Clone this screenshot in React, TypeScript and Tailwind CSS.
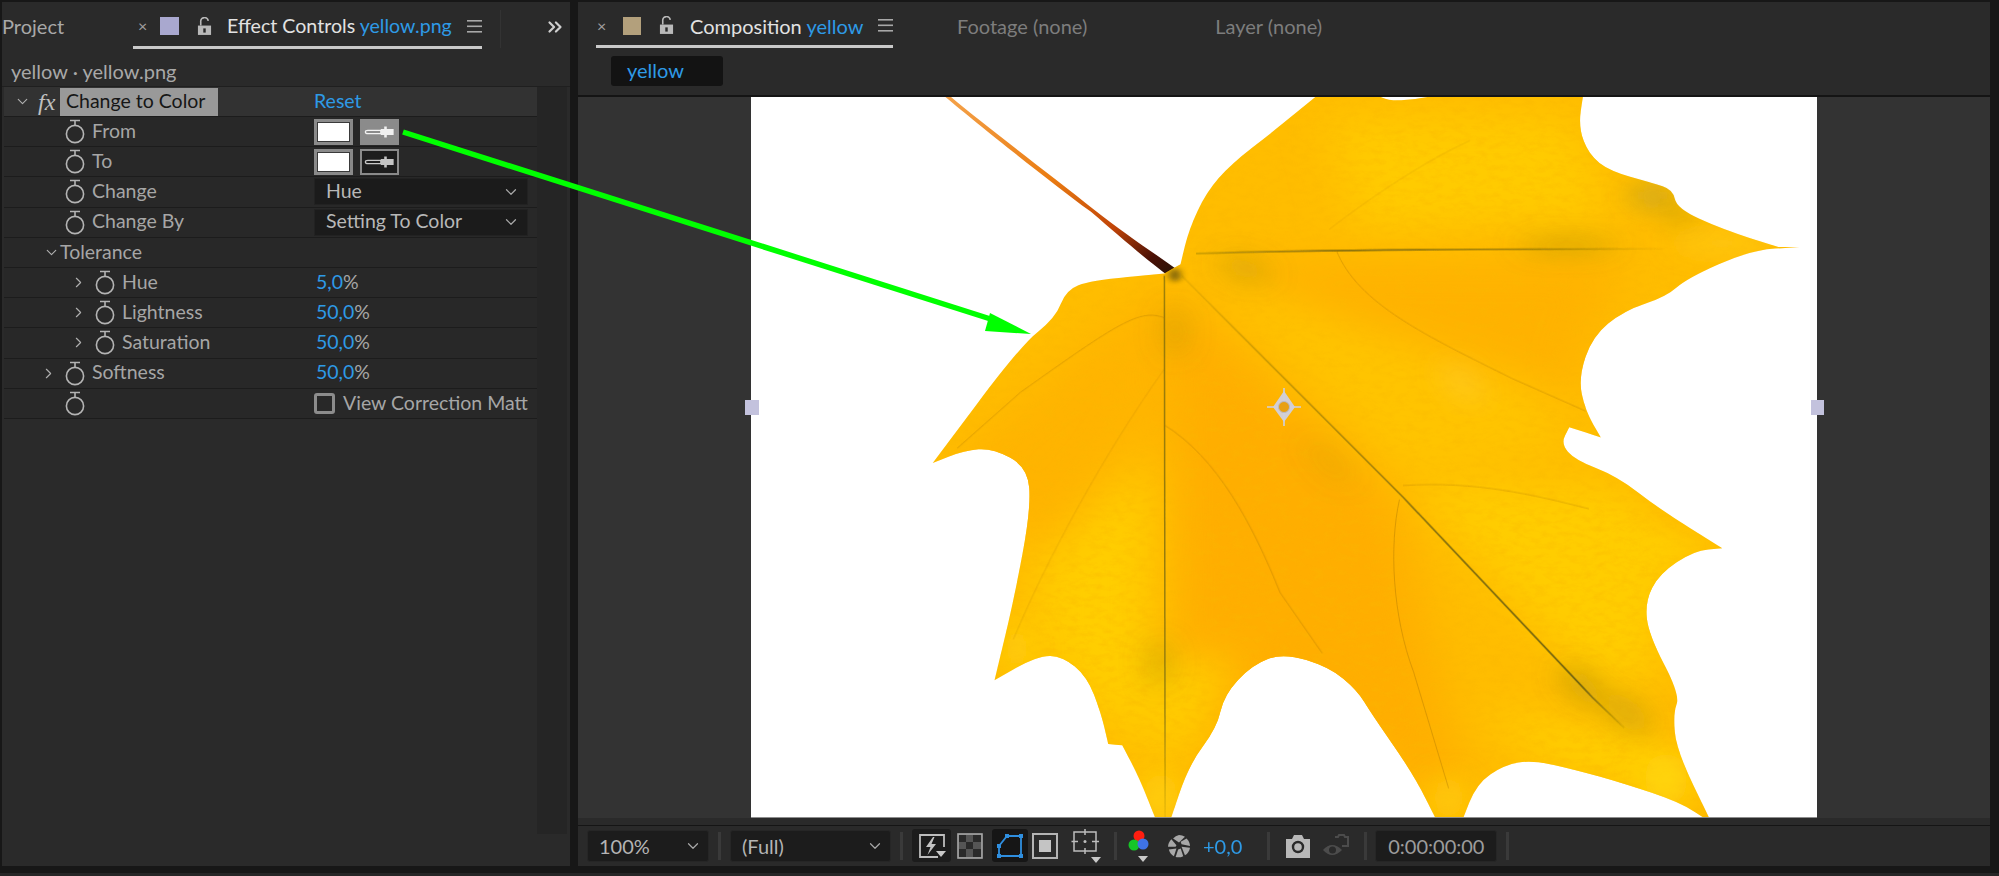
import React from "react";
import { ChevronDown, ChevronRight, ChevronsRight } from "lucide-react";

type P = [number, number, number?];
const outline: P[] = [
  [628,375,1],[640,300],[665,220],[700,160],[760,90],[825,10,1],[905,10,1],[925,24],[960,22],[1000,10,1],[1202,10,1],[1195,80],[1210,140],[1240,175],[1300,200],[1330,215],[1335,255],[1400,300],[1480,338,1],[1510,338,1],[1440,345],[1350,405],[1320,445],[1260,475],[1215,530],[1195,620],[1205,690],[1227,747,1],[1182,725,1],[1170,760],[1190,795],[1250,830],[1310,900],[1400,985,1],[1360,990],[1310,1040],[1290,1100],[1295,1170],[1340,1300],[1330,1340],[1335,1420],[1385,1575,1],[1340,1530],[1260,1490],[1190,1460],[1130,1440],[1090,1450],[1050,1490],[1028,1575,1],[995,1575,1],[960,1470],[900,1340],[880,1290],[840,1240],[775,1210],[730,1235],[690,1300],[680,1370],[640,1450],[612,1575,1],[595,1575,1],[570,1480],[545,1408,1],[525,1405,1],[515,1340],[495,1260],[460,1217],[425,1215],[363,1268,1],[390,1100],[415,900],[410,810],[360,770],[320,775],[275,802,1],[400,550],[450,490],[465,430],[500,410],[605,395,1],
];
function smooth(pts: P[]) {
  const mid = (a: P, b: P) => `${(a[0] + b[0]) / 2} ${(a[1] + b[1]) / 2}`;
  let d = `M${mid(pts[pts.length - 1], pts[0])}`;
  pts.forEach((p, i) => {
    const n = pts[(i + 1) % pts.length];
    d += p[2] ? ` L${p[0]} ${p[1]} L${mid(p, n)}` : ` Q${p[0]} ${p[1]} ${mid(p, n)}`;
  });
  return d + "Z";
}
const leafD = smooth(outline);

function Leaf() {
  const ns = { vectorEffect: "non-scaling-stroke" as const, fill: "none" };
  return (
    <svg viewBox="16 16 1519 1548" preserveAspectRatio="none" className="block w-full h-full">
      <defs>
        <clipPath id="leafclip"><path d={leafD} /></clipPath>
        <filter id="b40" x="-30%" y="-30%" width="160%" height="160%"><feGaussianBlur stdDeviation="34 40" /></filter>
        <filter id="b14" x="-80%" y="-80%" width="260%" height="260%"><feGaussianBlur stdDeviation="22 26" /></filter>
        <filter id="b3" x="-10%" y="-10%" width="120%" height="120%"><feGaussianBlur stdDeviation="0.8 1.2" /></filter>
        <filter id="b6" x="-100%" y="-100%" width="300%" height="300%"><feGaussianBlur stdDeviation="5 6" /></filter>
        <filter id="speck" x="0" y="0" width="100%" height="100%">
          <feTurbulence type="fractalNoise" baseFrequency="0.06 0.08" numOctaves="3" seed="7" />
          <feColorMatrix type="matrix" values="0 0 0 0 0.95  0 0 0 0 0.48  0 0 0 0 0  2.2 0 0 0 -0.95" />
        </filter>
        <linearGradient id="stem" x1="0" y1="0" x2="1" y2="1">
          <stop offset="0" stopColor="#f4a24a" /><stop offset="0.45" stopColor="#ea7c12" /><stop offset="0.72" stopColor="#c04408" /><stop offset="0.88" stopColor="#4a1006" /><stop offset="1" stopColor="#20160a" />
        </linearGradient>
        <linearGradient id="vd" gradientUnits="userSpaceOnUse" x1="640" y1="410" x2="1260" y2="1370">
          <stop offset="0" stopColor="#4f4c12" stopOpacity="0.1" /><stop offset="0.35" stopColor="#4f4c12" stopOpacity="0.45" /><stop offset="0.6" stopColor="#4f4c12" stopOpacity="0.7" /><stop offset="0.9" stopColor="#4f4c12" stopOpacity="0.8" /><stop offset="1" stopColor="#4f4c12" stopOpacity="0.1" />
        </linearGradient>
        <linearGradient id="vv" gradientUnits="userSpaceOnUse" x1="605" y1="400" x2="605" y2="1565">
          <stop offset="0" stopColor="#5e5a14" stopOpacity="0.6" /><stop offset="0.5" stopColor="#5e5a14" stopOpacity="0.65" /><stop offset="0.8" stopColor="#5e5a14" stopOpacity="0.6" /><stop offset="1" stopColor="#5e5a14" stopOpacity="0.1" />
        </linearGradient>
        <linearGradient id="vh" gradientUnits="userSpaceOnUse" x1="650" y1="345" x2="1320" y2="345">
          <stop offset="0" stopColor="#5e5a14" stopOpacity="0.3" /><stop offset="0.3" stopColor="#4f4c12" stopOpacity="0.7" /><stop offset="0.7" stopColor="#4f4c12" stopOpacity="0.55" /><stop offset="1" stopColor="#5e5a14" stopOpacity="0" />
        </linearGradient>
      </defs>
      <rect x="16" y="16" width="1519" height="1548" fill="#ffffff" />
      <path d="M293 16 L301 16 C345 72 440 180 505 258 C550 312 590 350 630 394 L614 404 C575 360 545 320 500 262 C435 190 340 75 293 16Z" fill="url(#stem)" />
      <path d={leafD} fill="#ffbd00" />
      <g clipPath="url(#leafclip)">
        <g filter="url(#b40)">
          <polygon points="605,420 940,880 1040,1565 760,1300 620,1565" fill="#ffae00" />
          <polygon points="690,365 1260,365 1180,680 960,600" fill="#ffb200" />
          <polygon points="300,790 590,430 590,700 430,1000" fill="#ffb400" />
          <polygon points="840,60 1190,60 1240,280 880,300" fill="#ffcb00" />
          <polygon points="960,850 1260,860 1340,1000 1290,1300 1180,1220" fill="#ffcd00" />
          <polygon points="700,420 1150,640 1180,780 940,820" fill="#ffc400" />
          <polygon points="430,1010 590,800 590,1420 540,1380 420,1180" fill="#ffce00" />
          <polygon points="610,1240 700,1210 660,1400 615,1500" fill="#ffd000" />
          <polygon points="1060,1330 1300,1400 1340,1530 1150,1440" fill="#ffd000" />
        </g>
        <rect x="16" y="16" width="1519" height="1548" filter="url(#speck)" opacity="0.4" />
        <g filter="url(#b14)" fill="#7f7a1c">
          <ellipse cx="1300" cy="228" rx="28" ry="20" opacity="0.6" />
          <ellipse cx="1340" cy="270" rx="16" ry="24" opacity="0.4" />
          <ellipse cx="1180" cy="335" rx="70" ry="12" opacity="0.45" />
          <ellipse cx="720" cy="385" rx="40" ry="20" opacity="0.3" transform="rotate(35 720 385)" />
          <ellipse cx="620" cy="520" rx="12" ry="60" opacity="0.3" />
          <ellipse cx="598" cy="1230" rx="10" ry="55" opacity="0.42" />
          <ellipse cx="1200" cy="1280" rx="18" ry="50" opacity="0.42" transform="rotate(-30 1200 1280)" />
          <ellipse cx="1265" cy="1340" rx="22" ry="50" opacity="0.32" transform="rotate(-30 1265 1340)" />
          <ellipse cx="840" cy="800" rx="16" ry="60" opacity="0.14" transform="rotate(-30 840 800)" />
        </g>
        <ellipse cx="620" cy="398" rx="9" ry="14" fill="#5a4c10" opacity="0.7" filter="url(#b6)" />
        <g filter="url(#b14)">
          <ellipse cx="1030" cy="630" rx="14" ry="50" fill="#ffd76a" opacity="0.4" transform="rotate(-25 1030 630)" />
          <ellipse cx="1300" cy="230" rx="22" ry="6" fill="#ffe9a8" opacity="0.6" />
          <ellipse cx="1400" cy="330" rx="70" ry="14" fill="#ffd628" opacity="0.7" />
          <ellipse cx="1330" cy="980" rx="50" ry="14" fill="#ffdd10" opacity="0.7" />
          <ellipse cx="1320" cy="1480" rx="30" ry="60" fill="#ffdc10" opacity="0.8" />
          <ellipse cx="600" cy="1520" rx="24" ry="60" fill="#ffd710" opacity="0.8" />
          <ellipse cx="1010" cy="1520" rx="22" ry="50" fill="#ffd710" opacity="0.7" />
          <ellipse cx="395" cy="1200" rx="18" ry="60" fill="#ffd810" opacity="0.7" />
        </g>
        <g filter="url(#b3)">
          <path d="M605 400 L606 1565" stroke="url(#vv)" strokeWidth="1.5" {...ns} />
          <path d="M630 400 L945 875 L1215 1305 L1260 1370" stroke="url(#vd)" strokeWidth="1.7" {...ns} />
          <path d="M650 352 C800 345 1100 342 1320 342" stroke="url(#vh)" strokeWidth="1.6" {...ns} />
          <path d="M850 345 C880 460 980 530 1100 620 L1205 690" stroke="#b07a00" strokeWidth="1" opacity="0.4" {...ns} />
          <path d="M605 490 C570 470 540 500 400 650 L310 770" stroke="#b07a00" strokeWidth="1" opacity="0.4" {...ns} />
          <path d="M605 720 C680 790 730 930 770 1080 L830 1210" stroke="#b07a00" strokeWidth="1" opacity="0.45" {...ns} />
          <path d="M940 880 C925 980 930 1130 960 1250 L1010 1500" stroke="#b07a00" strokeWidth="1" opacity="0.45" {...ns} />
          <path d="M945 850 C1050 840 1130 870 1210 900" stroke="#b07a00" strokeWidth="1" opacity="0.35" {...ns} />
          <path d="M605 600 C520 780 440 1000 390 1180" stroke="#b07a00" strokeWidth="1" opacity="0.25" {...ns} />
          <path d="M840 300 C900 230 980 150 1040 110" stroke="#b07a00" strokeWidth="1" opacity="0.2" {...ns} />
        </g>
      </g>
      <path d="M16 1563 H1535" stroke="#8a8a8a" strokeWidth="1" vectorEffect="non-scaling-stroke" />
    </svg>
  );
}

function Watch() {
  return (
    <svg width="20" height="25" viewBox="0 0 20 25" fill="none" stroke="#b4b4b4" strokeWidth="1.6" className="shrink-0">
      <circle cx="10" cy="15" r="8.6" />
      <path d="M5 1.5 H15 M10 1.5 V6" />
    </svg>
  );
}
function Lock() {
  return (
    <svg width="15" height="19" viewBox="0 0 16 20" className="shrink-0">
      <path d="M4 9 V5 a4 4 0 0 1 8 -1" fill="none" stroke="#b9b9b9" strokeWidth="1.7" />
      <rect x="1" y="9" width="14" height="10" fill="#b9b9b9" />
      <rect x="6.7" y="12" width="2.6" height="4.5" fill="#2a2a2a" />
    </svg>
  );
}
function Burger() {
  return (
    <svg width="15" height="13" viewBox="0 0 15 13" className="shrink-0" fill="#a8a8a8">
      <rect y="0" width="15" height="1.6" /><rect y="5.5" width="15" height="1.6" /><rect y="11" width="15" height="1.6" />
    </svg>
  );
}
function Dropper({ light }: { light?: boolean }) {
  return (
    <svg width="33" height="12" viewBox="0 0 35 14" className="shrink-0">
      <path d="M1 7 Q1 5 4 5 H19 V9 H4 Q1 9 1 7Z" fill="none" stroke={light ? "#f2f2f2" : "#c8c8c8"} strokeWidth="1.4" />
      <path d="M19 3.5 H23 V0.5 H26 V3.5 H34 V10.5 H26 V13.5 H23 V10.5 H19Z" fill={light ? "#f0f0f0" : "#c4c4c4"} />
    </svg>
  );
}
function Swatch() {
  return (
    <div className="w-[39px] h-[26px] border-[3px] border-[#8a8a8a] flex">
      <div className="flex-1 bg-white border border-[#3a3a3a]" />
    </div>
  );
}

const rowCls = "flex items-center h-[30.2px] border-b border-[#1c1c1c] bg-[#282828] text-[#a6a6a6] text-[19.5px] leading-none";

function Row({ level, chevron, watch = true, label, children }: { level: 1 | 2; chevron?: boolean; watch?: boolean; label?: string; children?: React.ReactNode }) {
  return (
    <div className={rowCls}>
      <div className={level === 1 ? "w-[310px] flex items-center pl-[36px]" : "w-[310px] flex items-center pl-[66px]"}>
        <div className="w-[25px] flex items-center">{chevron && <ChevronRight size={17} color="#b0b0b0" strokeWidth={1.6} />}</div>
        {watch && <Watch />}
        <span className="ml-[7px] pb-[2px]">{label}</span>
      </div>
      {children}
    </div>
  );
}
function Num({ v }: { v: string }) {
  return <span className="ml-[2px] pb-[2px]"><span className="text-[#2e9ae6]">{v}</span>%</span>;
}
function Sel({ v }: { v: string }) {
  return (
    <div className="w-[214px] h-[27px] bg-[#1b1b1b] border border-[#222] flex items-center justify-between pl-[11px] pr-[7px] text-[#b8b8b8]">
      <span className="pb-[2px]">{v}</span><ChevronDown size={18} color="#a8a8a8" strokeWidth={1.6} />
    </div>
  );
}
const Sep = () => <div className="w-[3px] h-[28px] bg-[#3a3a3a] shrink-0" />;
const Caret = () => <path d="M0 0 H10 L5 6Z" fill="#c8c8c8" />;

function Toolbar() {
  return (
    <div className="flex items-center h-[39px] pl-[9px] text-[20px] text-[#b4b4b4] leading-none">
      <div className="w-[122px] h-[32px] bg-[#1c1c1c] rounded-[3px] border border-[#262626] flex items-center justify-between pl-[11px] pr-[6px]">
        <span>100%</span><ChevronDown size={18} color="#a8a8a8" strokeWidth={1.6} />
      </div>
      <div className="mx-[9px]"><Sep /></div>
      <div className="w-[161px] h-[32px] bg-[#1c1c1c] rounded-[3px] border border-[#262626] flex items-center justify-between pl-[11px] pr-[6px]">
        <span>(Full)</span><ChevronDown size={18} color="#a8a8a8" strokeWidth={1.6} />
      </div>
      <div className="mx-[9px]"><Sep /></div>
      <div className="w-[39px] h-[33px] bg-[#1c1c1c] rounded-[3px] flex items-center justify-center shrink-0">
        <svg width="28" height="26" viewBox="0 0 28 26" fill="none">
          <path d="M20 24 H2 V2 H26 V14" stroke="#bdbdbd" strokeWidth="1.8" />
          <path d="M15 4 L8 14 H12.5 L9.5 22 L18 11 H13.5 L16.5 4Z" fill="#c4c4c4" />
          <g transform="translate(18 18)"><Caret /></g>
        </svg>
      </div>
      <svg width="26" height="26" viewBox="0 0 26 26" className="ml-[6px] shrink-0">
        <rect x="1" y="1" width="24" height="24" fill="#555" stroke="#a8a8a8" strokeWidth="1.6" />
        <g fill="#2a2a2a">
          <rect x="2" y="2" width="7" height="7" /><rect x="16" y="2" width="8" height="7" /><rect x="9" y="9" width="7" height="7" /><rect x="2" y="16" width="7" height="8" /><rect x="16" y="16" width="8" height="8" />
        </g>
      </svg>
      <div className="ml-[9px] w-[36px] h-[33px] bg-[#161616] rounded-[3px] flex items-center justify-center shrink-0">
        <svg width="28" height="26" viewBox="0 0 28 26" fill="none" stroke="#2f8fe0" strokeWidth="1.8">
          <path d="M11 3 H25 V23 H3 V13Z" />
          <g fill="#2f8fe0" stroke="none">
            <rect x="9" y="1" width="4" height="4" /><rect x="23" y="1" width="4" height="4" /><rect x="1" y="21" width="4" height="4" /><rect x="23" y="21" width="4" height="4" /><rect x="1" y="11" width="4" height="4" />
          </g>
        </svg>
      </div>
      <svg width="26" height="26" viewBox="0 0 26 26" className="ml-[4px] shrink-0">
        <rect x="1" y="1" width="24" height="24" fill="none" stroke="#b4b4b4" strokeWidth="2" />
        <rect x="7" y="7" width="12" height="12" fill="#c4c4c4" />
      </svg>
      <svg width="30" height="36" viewBox="0 0 30 36" fill="none" stroke="#bdbdbd" strokeWidth="1.5" className="ml-[13px] shrink-0">
        <rect x="3" y="4" width="22" height="19" />
        <path d="M14 1 V7 M14 20 V26 M0.5 13.5 H7 M21 13.5 H28" />
        <circle cx="14" cy="13.5" r="1.5" fill="#bdbdbd" stroke="none" />
        <g transform="translate(20 29)" stroke="none"><Caret /></g>
      </svg>
      <div className="ml-[13px]"><Sep /></div>
      <svg width="30" height="36" viewBox="0 0 30 36" className="ml-[11px] shrink-0">
        <circle cx="11" cy="8" r="5.5" fill="#ff1e10" />
        <circle cx="6" cy="17" r="5.5" fill="#16c526" />
        <circle cx="15" cy="16" r="5.5" fill="#3f73e6" />
        <g transform="translate(10 28)"><Caret /></g>
      </svg>
      <svg width="22" height="24" viewBox="0 0 26 28" className="ml-[10px] shrink-0" fill="#a8a8a8">
        <path d="M13 1 a13 13 0 0 1 7 2 L13 10 L6 5 A13 13 0 0 1 13 1Z" />
        <path d="M22 5 a13 13 0 0 1 4 9 L16 12 L15 9Z" />
        <path d="M26 16 a13 13 0 0 1 -6 9 L16 15Z" />
        <path d="M18 26 a13 13 0 0 1 -9 1 L12 18 L15 17Z" />
        <path d="M7 26 a13 13 0 0 1 -6 -8 L10 17 Z" />
        <path d="M0 15 a13 13 0 0 1 4 -9 L10 13 L9 15Z" />
      </svg>
      <span className="ml-[13px] text-[#2e9ae6]">+0,0</span>
      <div className="ml-[25px]"><Sep /></div>
      <svg width="26" height="26" viewBox="0 0 26 26" className="ml-[15px] shrink-0">
        <path d="M1 6 H7 L9 2 H17 L19 6 H25 V25 H1Z" fill="#b8b8b8" />
        <circle cx="13" cy="14" r="5" fill="none" stroke="#2a2a2a" strokeWidth="2.4" />
      </svg>
      <svg width="28" height="28" viewBox="0 0 28 28" className="ml-[11px] shrink-0">
        <path d="M1 18 Q10 8 20 18 Q10 28 1 18Z" fill="#4c4c4c" />
        <circle cx="10.5" cy="18" r="3.5" fill="#2a2a2a" />
        <path d="M13 5 h3 l1 -2 h5 l1 2 h3 v9 h-6" fill="none" stroke="#4c4c4c" strokeWidth="2" />
      </svg>
      <div className="ml-[14px]"><Sep /></div>
      <div className="ml-[8px] w-[122px] h-[32px] bg-[#1c1c1c] rounded-[3px] border border-[#262626] flex items-center justify-center text-[#9c9c9c]">0:00:00:00</div>
      <div className="ml-[9px]"><Sep /></div>
    </div>
  );
}

export default function App() {
  return (
    <div className="relative w-[1999px] h-[876px] bg-[#171717] overflow-hidden font-['Lato',sans-serif]">
      <div className="flex pt-[2px] pl-[2px] h-[864px] box-content">
        {/* Left panel */}
        <div className="w-[568px] h-[864px] bg-[#2a2a2a] flex flex-col shrink-0">
          <div className="flex items-start h-[58px] text-[20px] leading-none">
            <div className="w-[131px] pt-[14px] text-[#a8a8a8]">Project</div>
            <div className="w-[349px] h-[47px] border-b-[3px] border-[#c9c9c9] flex items-center pl-[5px] pt-[4px]">
              <span className="text-[#a0a0a0] text-[16px] w-[22px]">×</span>
              <div className="w-[19px] h-[18px] bg-[#a9a8cf] shrink-0" />
              <div className="ml-[18px]"><Lock /></div>
              <span className="ml-[15px] text-[19.6px] text-[#e2e2e2] whitespace-nowrap">Effect Controls <span className="text-[#2e9ae6]">yellow.png</span></span>
              <div className="ml-auto"><Burger /></div>
            </div>
            <div className="ml-[18px] mt-[8px] w-[1px] h-[38px] bg-[#333]" />
            <div className="ml-[43px] mt-[14px]"><ChevronsRight size={22} color="#cfcfcf" strokeWidth={2.4} /></div>
          </div>
          <div className="h-[27px] pl-[9px] pb-[4px] flex items-center text-[20px] text-[#a8a8a8] leading-none border-b border-[#1f1f1f]">yellow · yellow.png</div>
          <div className="w-[533px] ml-[2px]">
            <div className="flex items-center h-[30px] bg-[#323232] border-b border-[#1c1c1c] text-[19.5px] leading-none">
              <div className="w-[310px] flex items-center pl-[10px]">
                <ChevronDown size={17} color="#b0b0b0" strokeWidth={1.6} />
                <span className="ml-[7px] w-[20px] font-['Liberation_Serif',serif] italic text-[24px] text-[#c0c0c0]">fx</span>
                <span className="ml-[2px] h-[28px] w-[158px] bg-[#999999] text-[#161616] flex items-center pl-[6px] pb-[2px] whitespace-nowrap">Change to Color</span>
              </div>
              <span className="text-[#2e9ae6] pb-[2px]">Reset</span>
            </div>
            <Row level={1} label="From">
              <div className="flex gap-[7px]"><Swatch /><div className="w-[39px] h-[26px] bg-[#8b8b8b] flex items-center justify-center"><Dropper light /></div></div>
            </Row>
            <Row level={1} label="To">
              <div className="flex gap-[7px]"><Swatch /><div className="w-[39px] h-[26px] bg-[#1d1d1d] border-[2px] border-[#8a8a8a] flex items-center justify-center"><Dropper /></div></div>
            </Row>
            <Row level={1} label="Change"><Sel v="Hue" /></Row>
            <Row level={1} label="Change By"><Sel v="Setting To Color" /></Row>
            <div className={rowCls}>
              <div className="pl-[39px] flex items-center"><ChevronDown size={17} color="#b0b0b0" strokeWidth={1.6} /><span className="pb-[2px]">Tolerance</span></div>
            </div>
            <Row level={2} chevron label="Hue"><Num v="5,0" /></Row>
            <Row level={2} chevron label="Lightness"><Num v="50,0" /></Row>
            <Row level={2} chevron label="Saturation"><Num v="50,0" /></Row>
            <Row level={1} chevron label="Softness"><Num v="50,0" /></Row>
            <Row level={1}>
              <div className="flex items-center">
                <div className="w-[21px] h-[21px] rounded-[3px] border-[3px] border-[#8c8c8c] shrink-0" />
                <span className="ml-[8px] pb-[2px] whitespace-nowrap">View Correction Matt</span>
              </div>
            </Row>
          </div>
        </div>
        {/* Right panel */}
        <div className="ml-[8px] w-[1412px] h-[864px] bg-[#2a2a2a] flex flex-col shrink-0">
          <div className="flex items-start h-[53px] text-[20px] leading-none">
            <div className="ml-[18px] w-[297px] h-[46px] border-b-[3px] border-[#c9c9c9] flex items-center pt-[4px]">
              <span className="text-[#a0a0a0] text-[16px] w-[27px] pl-[1px]">×</span>
              <div className="w-[18px] h-[18px] bg-[#b3a07c] shrink-0" />
              <div className="ml-[18px]"><Lock /></div>
              <span className="ml-[16px] text-[#e2e2e2] whitespace-nowrap">Composition <span className="text-[#2e9ae6]">yellow</span></span>
              <div className="ml-auto"><Burger /></div>
            </div>
            <span className="ml-[64px] mt-[14px] text-[#7d7d7d] whitespace-nowrap">Footage (none)</span>
            <span className="ml-[128px] mt-[14px] text-[#7d7d7d] whitespace-nowrap">Layer (none)</span>
          </div>
          <div className="h-[42px] pl-[33px] border-b-[2px] border-[#141414]">
            <div className="w-[112px] h-[30px] mt-[1px] bg-[#131313] rounded-[3px] pl-[16px] pb-[2px] flex items-center text-[20px] text-[#2e9ae6] leading-none">yellow</div>
          </div>
          <div className="h-[721px] bg-[#333333] pl-[173px] shrink-0">
            <div className="w-[1066px] h-[721px]"><Leaf /></div>
          </div>
          <div className="h-[8px] shrink-0 border-b border-[#151515]" />
          <Toolbar />
        </div>
      </div>
      {/* Overlays: scrollbar gutter, transform handles, anchor, arrow */}
      <div className="absolute left-[537px] top-[87px] w-[30px] h-[747px] bg-[#252525]" />
      <div className="absolute left-0 bottom-0 w-full h-[3px] bg-[#262626]" />
      <div className="absolute left-[745px] top-[400px] w-[14px] h-[15px] bg-[#c3c2dd]" />
      <div className="absolute left-[1811px] top-[400px] w-[13px] h-[15px] bg-[#c3c2dd]" />
      <svg className="absolute left-[1264px] top-[388px]" width="40" height="38" viewBox="0 0 40 38" fill="none">
        <path d="M20 3 L31 19 L20 34 L9 19Z" fill="#d0d0de" opacity="0.95" />
        <path d="M20 0 V38 M3 19 H37" stroke="#cfcfdd" strokeWidth="1.6" />
        <circle cx="20" cy="19" r="5.5" fill="#e8a012" stroke="#b8b8c8" strokeWidth="1" />
      </svg>
      <svg className="absolute left-0 top-0 pointer-events-none" width="1999" height="876" viewBox="0 0 1999 876">
        <path d="M403 132 L1000 322" stroke="#00ff00" strokeWidth="5.5" fill="none" />
        <path d="M1031 334 L990 313 L985 331Z" fill="#00ff00" />
      </svg>
    </div>
  );
}
